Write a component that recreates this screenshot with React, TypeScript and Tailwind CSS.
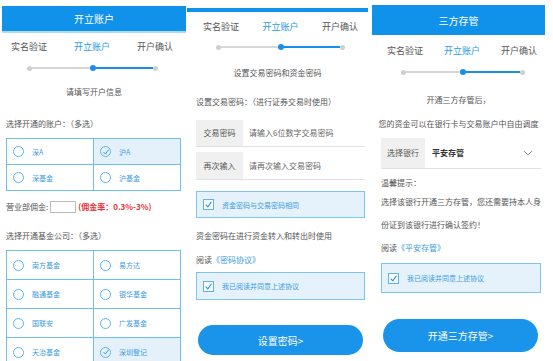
import React from "react";

const FONT = { fontFamily: '"Noto Sans CJK SC", "Noto Sans", sans-serif' };

function Check({ size = 9 }: { size?: number }) {
  return (
    <svg width={size} height={size} viewBox="0 0 10 10" fill="none">
      <polyline points="2.2,5.4 4.2,7.6 8,2.4" stroke="#2a96e6" strokeWidth="1.2" strokeLinecap="round" strokeLinejoin="round" />
    </svg>
  );
}

function Steps({ labelClass, dotClass }: { labelClass: string; dotClass: string }) {
  return (
    <>
      <div className={`flex justify-between text-[9px] leading-[12px] text-[#555] ${labelClass}`}>
        <span>实名验证</span>
        <span className="text-[#2a9be8]">开立账户</span>
        <span>开户确认</span>
      </div>
      <div className={`flex items-center ${dotClass}`}>
        <span className="h-[5px] w-[5px] rounded-full bg-[#cfcfcf]" />
        <span className="h-[1.5px] flex-1 bg-[#d6d6d6]" />
        <span className="h-[6px] w-[6px] rounded-full bg-[#1a8fe6]" />
        <span className="h-[1.5px] flex-1 bg-[#1a8fe6]" />
        <span className="h-[5px] w-[5px] rounded-full bg-[#cfcfcf]" />
      </div>
    </>
  );
}

type Opt = { label: string; checked?: boolean };

function OptionGrid({ items, rowH }: { items: Opt[]; rowH: string }) {
  return (
    <div className="grid grid-cols-2 border-l-[1.5px] border-t-[1.5px] border-[#6cc0ec]">
      {items.map((it) => (
        <div
          key={it.label}
          className={`flex items-center gap-[8px] border-b-[1.5px] border-r-[1.5px] border-[#6cc0ec] pl-[6px] ${rowH} ${
            it.checked ? "bg-[#e4f1fb]" : "bg-white"
          }`}
        >
          <span className="flex h-[11px] w-[11px] items-center justify-center rounded-full border-[1.2px] border-[#5ab6ea]">
            {it.checked && <Check size={8} />}
          </span>
          <span className="text-[7px] leading-[10px] text-[#3a9be0]">{it.label}</span>
        </div>
      ))}
    </div>
  );
}

function CheckBox({ text, cls }: { text: string; cls: string }) {
  return (
    <div className={`flex items-center gap-[8px] border-[1.5px] border-[#7cc5ee] bg-[#e6f2fb] pl-[6px] ${cls}`}>
      <span className="flex h-[11px] w-[11px] items-center justify-center border border-[#5ab6ea] bg-white">
        <Check size={9} />
      </span>
      <span className="text-[7px] leading-[10px] text-[#3a9be0]">{text}</span>
    </div>
  );
}

function PanelOne() {
  return (
    <div className="ml-[2px] h-[361px] w-[184px] shrink-0 overflow-hidden bg-white pt-[6px]">
      <div className="flex h-[27px] items-center justify-center border-b-2 border-[#a8dcf7] bg-[#1192ea] text-[10px] text-white">
        开立账户
      </div>
      <Steps labelClass="mt-[8px] pl-[9px] pr-[13px]" dotClass="mt-[12px] pl-[25px] pr-[28px]" />
      <div className="mt-[15px] text-center text-[8px] leading-[12px] text-[#555]">请填写开户信息</div>
      <div className="mt-[20px] pl-[4px] text-[8px] leading-[12px] text-[#555]">选择开通的账户：（多选）</div>
      <div className="mt-[8px] pl-[4px] pr-[5px]">
        <OptionGrid
          rowH="h-[26px]"
          items={[
            { label: "深A" },
            { label: "沪A", checked: true },
            { label: "深基金" },
            { label: "沪基金" },
          ]}
        />
      </div>
      <div className="mt-[10px] flex items-center pl-[4px] text-[8px] leading-[12px] text-[#555]">
        <span>营业部佣金:</span>
        <span className="ml-[2px] h-[12px] w-[26px] border border-[#bbb] bg-white" />
        <span className="ml-[2px] font-bold text-[#e8333a]">(佣金率：0.3%-3%)</span>
      </div>
      <div className="mt-[17px] pl-[4px] text-[8px] leading-[12px] text-[#555]">选择开通基金公司：（多选）</div>
      <div className="mt-[8px] pl-[4px] pr-[5px]">
        <OptionGrid
          rowH="h-[29px]"
          items={[
            { label: "南方基金" },
            { label: "易方达" },
            { label: "融通基金" },
            { label: "银华基金" },
            { label: "国联安" },
            { label: "广发基金" },
            { label: "天治基金" },
            { label: "深圳登记", checked: true },
          ]}
        />
      </div>
    </div>
  );
}

function InputRow({ label, placeholder, cls }: { label: string; placeholder: string; cls: string }) {
  return (
    <div className={`flex border-b border-[#e2e2e2] ${cls}`}>
      <div className="flex w-[47px] items-center justify-center bg-[#f0f0f0] text-[8px] text-[#555]">{label}</div>
      <div className="flex items-center pl-[6px] text-[8px] text-[#666]">{placeholder}</div>
    </div>
  );
}

function PanelTwo() {
  return (
    <div className="ml-[1px] h-[361px] w-[181px] shrink-0 overflow-hidden bg-white pt-[8px]">
      <div className="h-[4px] bg-[#1192ea]" />
      <Steps labelClass="mt-[9px] pl-[16px] pr-[10px]" dotClass="mt-[11px] pl-[29px] pr-[23px]" />
      <div className="mt-[17px] text-center text-[8px] leading-[12px] text-[#555]">设置交易密码和资金密码</div>
      <div className="mt-[17px] pl-[9px] text-[8px] leading-[12px] text-[#555]">设置交易密码：（进行证券交易时使用）</div>
      <div className="pl-[9px] pr-[3px]">
        <InputRow cls="mt-[12px] h-[27px]" label="交易密码" placeholder="请输入6位数字交易密码" />
        <InputRow cls="mt-[5px] h-[28px]" label="再次输入" placeholder="请再次输入交易密码" />
        <CheckBox cls="mt-[11px] h-[27px]" text="资金密码与交易密码相同" />
        <div className="mt-[12px] text-[8px] leading-[12px] text-[#555]">资金密码在进行资金转入和转出时使用</div>
        <div className="mt-[12px] text-[8px] leading-[12px] text-[#555]">
          阅读<span className="text-[#3a9be0]">《密码协议》</span>
        </div>
        <CheckBox cls="mt-[6px] h-[28px]" text="我已阅读并同意上述协议" />
        <div className="mt-[25px] flex h-[30px] items-center justify-center rounded-full bg-[#1a93ea] text-[10px] text-white mx-[2px]">
          设置密码&gt;
        </div>
      </div>
    </div>
  );
}

function PanelThree() {
  return (
    <div className="ml-[2px] h-[361px] w-[183px] shrink-0 overflow-hidden bg-white pt-[5px]">
      <div className="ml-[2px] flex h-[30px] w-[173px] items-center justify-center bg-[#1192ea] text-[10px] text-white">
        三方存管
      </div>
      <div className="w-[177px]">
        <Steps labelClass="mt-[10px] pl-[17px] pr-[10px]" dotClass="mt-[12px] pl-[31px] pr-[22px]" />
      </div>
      <div className="w-[177px]">
        <div className="mt-[19px] text-center text-[8px] leading-[12px] text-[#555]">开通三方存管后，</div>
        <div className="mt-[12px] text-center text-[8px] leading-[12px] text-[#555]">您的资金可以在银行卡与交易账户中自由调度</div>
      </div>
      <div className="w-[171px] pl-[11px]">
        <div className="mt-[8px] flex h-[31px] border-b border-[#e2e2e2]">
          <div className="flex w-[44px] items-center justify-center bg-[#f0f0f0] text-[8px] text-[#555]">选择银行</div>
          <div className="flex flex-1 items-center justify-between pl-[7px] pr-[8px]">
            <span className="text-[8px] font-bold text-[#333]">平安存管</span>
            <svg width="10" height="6" viewBox="0 0 10 6" fill="none">
              <polyline points="1,1 5,5 9,1" stroke="#888" strokeWidth="0.9" />
            </svg>
          </div>
        </div>
        <div className="mt-[8px] text-[8px] leading-[12px] text-[#555]">温馨提示：</div>
        <div className="mt-[7px] text-[8px] leading-[12px] text-[#555]">选择该银行开通三方存管，您还需要持本人身</div>
        <div className="mt-[11px] text-[8px] leading-[12px] text-[#555]">份证到该银行进行确认签约！</div>
        <div className="mt-[11px] text-[8px] leading-[12px] text-[#555]">
          阅读<span className="text-[#3a9be0]">《平安存管》</span>
        </div>
        <CheckBox cls="mt-[9px] h-[30px]" text="我已阅读并同意上述协议" />
        <div className="mt-[26px] ml-[2px] mr-[3px] flex h-[33px] items-center justify-center rounded-full bg-[#1a93ea] text-[10px] text-white">
          开通三方存管&gt;
        </div>
      </div>
    </div>
  );
}

export default function App() {
  return (
    <div className="flex h-[361px] w-[553px] overflow-hidden bg-white" style={FONT}>
      <PanelOne />
      <PanelTwo />
      <PanelThree />
    </div>
  );
}
